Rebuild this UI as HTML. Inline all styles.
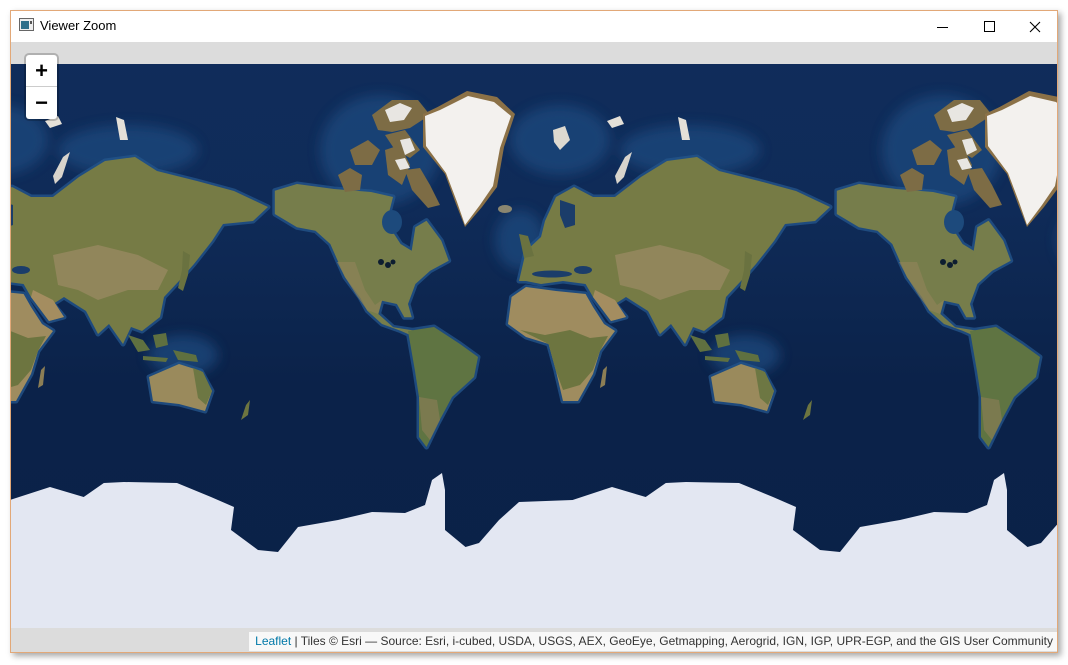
<!DOCTYPE html>
<html><head><meta charset="utf-8"><style>
html,body{margin:0;padding:0;background:#fff;width:1068px;height:665px;overflow:hidden;font-family:"Liberation Sans",Arial,sans-serif}
#win{position:absolute;left:10px;top:10px;width:1046px;height:641px;border:1px solid #e2a878;background:#dcdcdc;box-shadow:3px 3px 6px rgba(0,0,0,.35);overflow:hidden}
#title{position:absolute;left:0;top:0;width:1046px;height:31px;background:#fff;font-size:13px;color:#000}
#title .t{position:absolute;left:29px;top:7px}
#map{position:absolute;left:0;top:53px;width:1046px;height:564px;overflow:hidden;background:#0c2349}
#zoom{position:absolute;left:13px;top:42px;width:31px;height:64px;background:#fff;border:2px solid rgba(0,0,0,.2);border-radius:5px;background-clip:padding-box}
#zoom div{height:32px;text-align:center;font:bold 22px/32px "Liberation Sans",Arial,sans-serif;color:#000}
#zoom div:first-child{border-bottom:1px solid #ccc;height:31px;line-height:31px}
#attr{position:absolute;right:0;top:621px;height:19px;background:rgba(255,255,255,.8);font-size:12px;line-height:19px;padding:0 4px 0 6px;color:#333;white-space:nowrap}
#attr a{color:#0078a8;text-decoration:none}
</style></head><body>
<div id="win">
 <div id="title">
  <svg style="position:absolute;left:8px;top:7px" width="15" height="13" viewBox="0 0 15 13"><rect x=".5" y=".5" width="14" height="12" fill="#eee" stroke="#666"/><rect x="2" y="3" width="8" height="8" fill="#2f6f8a"/><rect x="11" y="3" width="2" height="3" fill="#555"/></svg>
  <span class="t">Viewer Zoom</span>
  <svg style="position:absolute;left:920px;top:8px" width="120" height="16" viewBox="0 0 120 16">
   <line x1="6" y1="8.5" x2="17" y2="8.5" stroke="#000"/>
   <rect x="53.5" y="2.5" width="10" height="10" fill="none" stroke="#000"/>
   <path d="M99 3 L109 13 M109 3 L99 13" stroke="#000" stroke-width="1.1"/>
  </svg>
 </div>
 <div id="map">
 <svg width="1046" height="564" viewBox="11 64 1046 564">
  <defs>
   <linearGradient id="oc" x1="0" y1="0" x2="0" y2="1">
    <stop offset="0" stop-color="#102d5c"/><stop offset=".3" stop-color="#0f2b58"/><stop offset=".55" stop-color="#0b2249"/><stop offset="1" stop-color="#0a2148"/>
   </linearGradient>
   <filter id="bl"><feGaussianBlur stdDeviation="6"/></filter>
   <g id="world">
    <g fill="#1d4a7e" opacity=".75" filter="url(#bl)">
     <ellipse cx="380" cy="150" rx="60" ry="55"/>
     <ellipse cx="560" cy="140" rx="50" ry="35"/>
     <ellipse cx="690" cy="150" rx="70" ry="25"/>
     <ellipse cx="745" cy="355" rx="35" ry="20"/>
     <ellipse cx="520" cy="240" rx="25" ry="30"/>
    </g>
    <g stroke="#23548a" stroke-width="5" stroke-linejoin="round" fill="none" opacity=".8">
     <path d="M274.8,190.7 297,184 334,189 371,192 393,197 389.5,210.7 387.6,224 400.6,244 411.7,250.7 415.4,227.3 426.5,220.7 441.3,240.7 448.7,260.7 430.2,270.7 415.4,284 408,304 411.7,317.3 404.3,317.3 396.9,304 382,300.7 378.4,314 393.2,327.3 415.4,330.7 415.4,337.3 400.6,330.7 382,324 367.3,310.7 360,297.3 345,277.3 337.7,260.7 330.3,244 315.5,230.7 297,227.3 274.8,214Z"/>
     <path d="M408,331 434,327 460,344 478,357 474,377 452,397 437.6,424 426.5,447 419,437 419,397 415,371Z"/>
     <path d="M519,281 526,251 541,237 545,221 556,197 574,187 593,197 615,197 641,177 667,161 697,157 719,171 759,181 796,191 830,207 815,221 785,224 774,241 756,264 741,281 726,297 722,317 704,331 693,327 685,344 671,324 660,334 648,311 626,297 615,304 626,317 611,321 593,297 585.6,284 563,281 541,284 526,281Z"/>
     <path d="M585.6,294 556,291 526,287 511.6,297 508,324 526,337 548.6,344 556,371 563,401 578,401 593,374 600,351 615,331 604,324 593,307Z"/>
     <path d="M711,377 741,364 763,371 774,391 767,411 741,404 715,401Z"/>
    </g>
    <path fill="#767d4b" d="M274.8,190.7 297,184 334,189 371,192 393,197 389.5,210.7 387.6,224 400.6,244 411.7,250.7 415.4,227.3 426.5,220.7 441.3,240.7 448.7,260.7 430.2,270.7 415.4,284 408,304 411.7,317.3 404.3,317.3 396.9,304 382,300.7 378.4,314 393.2,327.3 415.4,330.7 415.4,337.3 400.6,330.7 382,324 367.3,310.7 360,297.3 345,277.3 337.7,260.7 330.3,244 315.5,230.7 297,227.3 274.8,214Z"/>
    <path fill="#8f8358" opacity=".7" d="M337,262 355,262 365,290 375,305 382,300 378,314 367,310 357,296 345,277Z"/>
    <g fill="#0d1d30"><circle cx="381" cy="262" r="3"/><circle cx="388" cy="265" r="3"/><circle cx="393" cy="262" r="2.5"/></g>
    <ellipse cx="392" cy="222" rx="10" ry="12" fill="#1d4a7c"/>
    <g fill="#7d6c45">
     <path d="M338,175 350,168 362,175 360,190 345,192Z"/>
     <path d="M350,150 368,140 380,150 372,165 355,165Z"/>
     <path d="M385,150 400,145 410,165 402,185 388,175Z"/>
     <path d="M372,115 392,100 418,100 430,115 410,128 392,132 378,130Z"/>
     <path d="M385,135 405,130 420,150 410,158 395,150Z"/>
     <path d="M405,170 420,168 430,185 440,205 428,208 412,190Z"/>
    </g>
    <g fill="#e8e6e2">
     <path d="M385,110 400,103 412,108 404,120 390,122Z"/>
     <path d="M400,140 410,138 415,150 405,155Z"/>
     <path d="M395,160 405,158 410,168 400,170Z"/>
    </g>
    <path fill="#8b7147" d="M423,114 437.6,107 467,91 497,97 515,114 504,147 497,187 482,207 465,227 456,204 445,174 423,147Z"/>
    <path fill="#f3f1ee" d="M425,116 440,110 468,96 494,102 511,116 500,148 493,186 480,205 465,225 457,202 446,173 426,146Z"/>
    <ellipse cx="505" cy="209" rx="7" ry="4" fill="#8a8670"/>
    <path fill="#ddd9d0" d="M553,130 565,126 570,140 560,150 554,142Z"/>
    <path fill="#e4e0d8" d="M607,121 620,116 624,124 612,128Z"/>
    <path fill="#e4e0d8" d="M678,117 686,120 690,140 682,140Z"/>
    <path fill="#d8d4cc" d="M625,157 632,152 624,177 617,184 615,176Z"/>
    <path fill="#5f7442" d="M408,331 434,327 460,344 478,357 474,377 452,397 437.6,424 426.5,447 419,437 419,397 415,371Z"/>
    <path fill="#8d7e58" opacity=".6" d="M419,397 437,400 440,420 430,440 422,430Z"/>
    <path fill="#767b45" d="M519,281 526,251 541,237 545,221 556,197 574,187 593,197 615,197 641,177 667,161 697,157 719,171 759,181 796,191 830,207 815,221 785,224 774,241 756,264 741,281 726,297 722,317 704,331 693,327 685,344 671,324 660,334 648,311 626,297 615,304 626,317 611,321 593,297 585.6,284 563,281 541,284 526,281Z"/>
    <path fill="#988a60" opacity=".8" d="M615,255 660,245 700,255 730,270 720,290 690,290 660,300 640,290 620,285Z"/>
    <path fill="#a48d60" d="M595,290 615,300 626,317 611,321 593,297Z"/>
    <ellipse cx="583" cy="270" rx="9" ry="4" fill="#1b3d6a"/>
    <ellipse cx="552" cy="274" rx="20" ry="3.5" fill="#1b3d6a"/>
    <path fill="#1b3d6a" d="M560,200 575,205 575,225 565,228 560,215Z"/>
    <path fill="#6a7240" d="M519,234 528,236 534,256 524,258Z"/>
    <path fill="#6a7240" d="M745,251 752,255 750,275 745,291 740,288 744,270Z"/>
    <g fill="#5f7040">
     <path d="M690,335 705,340 712,350 700,352Z"/>
     <path d="M715,335 728,333 730,345 718,348Z"/>
     <path d="M735,350 758,355 760,362 740,360Z"/>
     <path d="M705,356 730,358 728,362 705,360Z"/>
    </g>
    <path fill="#9f8c5f" d="M585.6,294 556,291 526,287 511.6,297 508,324 526,337 548.6,344 556,371 563,401 578,401 593,374 600,351 615,331 604,324 593,307Z"/>
    <path fill="#6d7540" d="M520,330 548.6,344 556,371 563,390 580,385 593,370 600,351 608,336 590,338 570,330 545,335Z"/>
    <path fill="#8c7e55" d="M603,370 607,366 605,385 600,388Z"/>
    <path fill="#9a8a5c" d="M711,377 741,364 763,371 774,391 767,411 741,404 715,401Z"/>
    <path fill="#6d7743" d="M755,368 765,372 774,391 768,405 760,398Z"/>
    <path fill="#6d7540" d="M808,405 812,400 810,415 803,420Z"/>
   </g>
  </defs>
  <rect x="0" y="0" width="1100" height="700" fill="url(#oc)"/>
  <use href="#world" x="-562"/>
  <use href="#world"/>
  <use href="#world" x="562"/>
  <path fill="#e3e7f2" d="M10,500 50,487 83.7,497 103.8,483 124,482 177,483 211,497 234,507 231,530 258,550 278,552 298,527 338,520 372,512 405,513 425,505 432,480 442,473 445,490 445,530 465.5,547 479,543 499,520 519,502 572.6,500 612,487 645.7,497 665.8,483 686,482 739,483 773,497 796,507 793,530 820,550 840,552 860,527 900,520 934,512 967,513 987,505 994,480 1004,473 1007,490 1007,530 1027.5,547 1041,543 1061,520 1061,640 10,640Z"/>
 </svg>
 </div>
 <div id="zoom"><div>+</div><div>−</div></div>
 <div id="attr"><a>Leaflet</a> | Tiles © Esri — Source: Esri, i-cubed, USDA, USGS, AEX, GeoEye, Getmapping, Aerogrid, IGN, IGP, UPR-EGP, and the GIS User Community</div>
</div>
</body></html>
